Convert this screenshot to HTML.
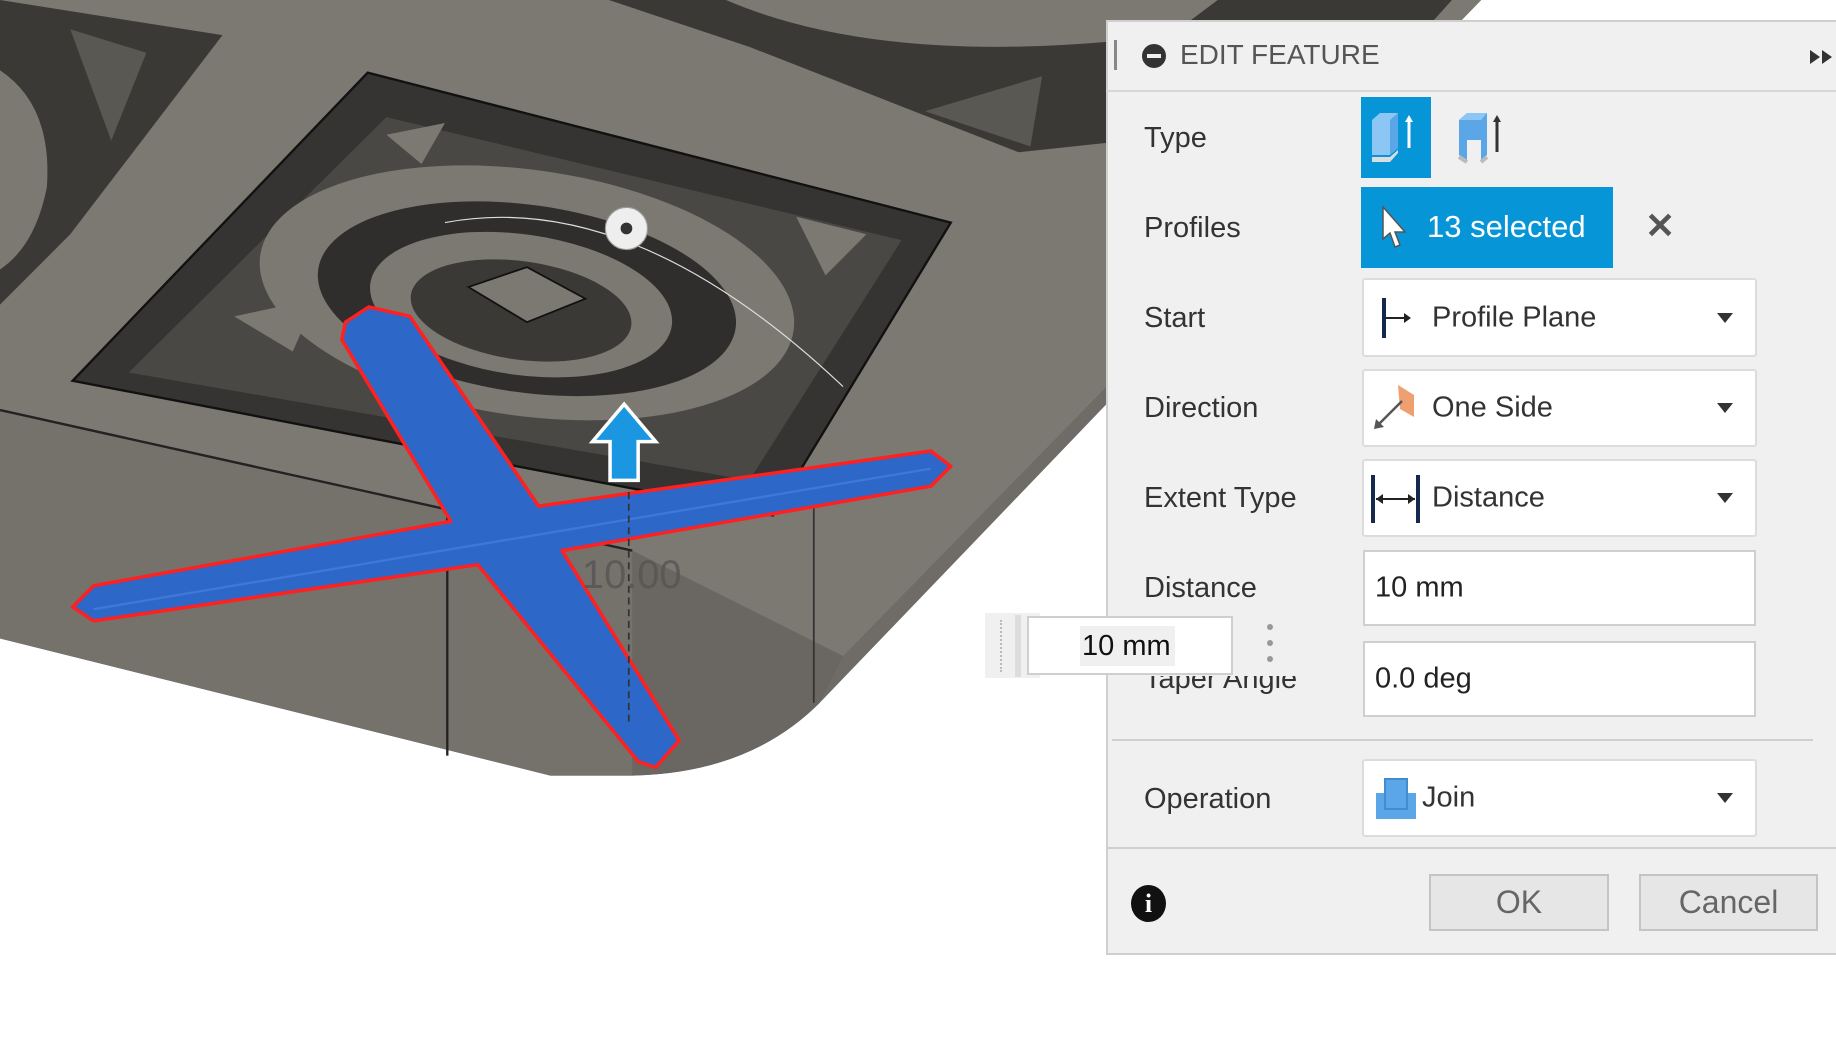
<!DOCTYPE html>
<html><head><meta charset="utf-8"><style>
*{margin:0;padding:0;box-sizing:border-box}
body{width:1836px;height:1038px;overflow:hidden;background:#fff;position:relative;font-family:"Liberation Sans",Arial,sans-serif}
.abs{position:absolute}
.lbl{position:absolute;left:1144px;font-size:29px;color:#333;line-height:34px}
.dd{position:absolute;left:1362px;width:395px;background:#fff;border:2px solid #dcdcdc;border-radius:3px}
.dd .t{position:absolute;left:68px;top:50%;transform:translateY(-50%);font-size:29px;color:#333}
.dd .ar{position:absolute;right:22px;top:50%;margin-top:-5px;width:0;height:0;border-left:8px solid transparent;border-right:8px solid transparent;border-top:10px solid #333}
.in{position:absolute;left:1363px;width:393px;background:#fff;border:2px solid #cfcfcf}
.in span{position:absolute;left:10px;top:50%;transform:translateY(-50%);font-size:29px;color:#222}
.btn{position:absolute;top:874px;height:57px;background:#e6e6e6;border:2px solid #c4c4c4;font-size:32px;color:#666;text-align:center;line-height:53px}
</style></head><body>
<svg class="abs" style="left:0;top:0" width="1836" height="1038" viewBox="0 0 1568 886" preserveAspectRatio="none">
<!-- body -->
<path d="M0,0 L1265,0 L945,330 L945,345 L700,600 Q640,660 540,662 L470,662 L0,545 Z" fill="#6f6c67"/>
<!-- top face -->
<path d="M0,0 L1265,0 L945,330 L720,560 L540,470 L0,350 Z" fill="#7c7972"/>
<!-- front left face -->
<path d="M0,350 L540,470 L540,662 L470,662 L0,545 Z" fill="#75726c"/>
<path d="M540,470 L720,560 L700,600 Q640,660 540,662 Z" fill="#6a6762"/>
<line x1="382" y1="440" x2="382" y2="645" stroke="#222" stroke-width="2"/>
<line x1="695" y1="420" x2="695" y2="600" stroke="#333" stroke-width="1.5"/>
<path d="M0,350 L540,470" stroke="#222" stroke-width="2" fill="none"/>
<!-- top-left pockets -->
<path d="M0,0 L190,30 L60,200 L0,260 Z" fill="#3a3936"/>
<path d="M0,60 Q45,90 40,160 Q30,210 0,230 Z" fill="#7c7972"/>
<path d="M60,25 L125,45 L95,120 Z" fill="#5a5853"/>
<!-- top-right pocket -->
<path d="M520,0 L1240,0 L1150,100 L870,130 L640,40 Z" fill="#3a3936"/>
<path d="M620,0 Q760,60 1000,30 L1040,0 Z" fill="#7c7972"/>
<path d="M790,95 L890,65 L880,125 Z" fill="#5a5853"/>
<!-- square recess -->
<path d="M314,62 L812,190 L660,440 L62,325 Z" fill="#353432" stroke="#111" stroke-width="2"/>
<path d="M330,100 L770,205 L640,410 L110,318 Z" fill="#4a4845"/>
<ellipse cx="450" cy="250" rx="230" ry="105" fill="#7c7972" transform="rotate(8 450 250)"/>
<ellipse cx="450" cy="255" rx="180" ry="80" fill="#2f2e2c" transform="rotate(8 450 255)"/>
<ellipse cx="445" cy="260" rx="130" ry="60" fill="#7c7972" transform="rotate(8 445 260)"/>
<ellipse cx="445" cy="265" rx="95" ry="42" fill="#3a3936" transform="rotate(8 445 265)"/>
<path d="M400,245 L450,228 L500,255 L450,275 Z" fill="#7c7972" stroke="#111" stroke-width="1.5"/>
<path d="M200,270 L270,255 L250,300 Z" fill="#7c7972"/>
<path d="M680,185 L740,200 L705,235 Z" fill="#7c7972"/>
<path d="M330,115 L380,105 L360,140 Z" fill="#7c7972"/>
<path d="M380,190 Q540,160 720,330" stroke="#ddd" stroke-width="1" fill="none"/>
<!-- X shape -->
<g fill="#2d68c9" stroke="#ff2020" stroke-width="3" stroke-linejoin="round">
<path d="M295,275 L315,262 L350,270 L460,432 L795,385 L812,398 L795,415 L480,470 L580,632 L560,655 L545,650 L408,482 L80,530 L62,518 L80,500 L385,445 L292,290 Z"/>
</g>
<path d="M80,520 L795,400" stroke="#4b84e0" stroke-width="2" opacity=".6"/>
<text x="497" y="502" font-family="Liberation Sans" font-size="34" fill="#555" opacity=".8">10.00</text>
<line x1="537" y1="420" x2="537" y2="620" stroke="#333" stroke-width="1.5" stroke-dasharray="6,4"/>
<!-- arrow -->
<path d="M533,345 L560,377 L545,377 L545,410 L521,410 L521,377 L506,377 Z" fill="#1a97e0" stroke="#fff" stroke-width="3"/>
<!-- marker -->
<circle cx="535" cy="195" r="18" fill="#eee" stroke="#999" stroke-width="1"/>
<circle cx="535" cy="195" r="5" fill="#333"/>
</svg>

<!-- panel -->
<div class="abs" style="left:1106px;top:20px;width:740px;height:935px;background:#f0f0f0;border:2px solid #cfcfcf"></div>
<div class="abs" style="left:1106px;top:90px;width:730px;height:2px;background:#d6d6d6"></div>
<div class="abs" style="left:1114px;top:40px;width:3px;height:30px;background:#888"></div>
<div class="abs" style="left:1142px;top:44px;width:24px;height:24px;border-radius:50%;background:#333"></div>
<div class="abs" style="left:1147px;top:54px;width:14px;height:4px;background:#f0f0f0"></div>
<div class="abs" style="left:1180px;top:38px;font-size:28px;color:#555;line-height:34px">EDIT FEATURE</div>
<svg class="abs" style="left:1808px;top:48px" width="28" height="18"><path d="M2,2 L12,9 L2,16Z M14,2 L24,9 L14,16Z" fill="#333"/></svg>

<div class="lbl" style="top:121px">Type</div>
<div class="lbl" style="top:211px">Profiles</div>
<div class="lbl" style="top:301px">Start</div>
<div class="lbl" style="top:391px">Direction</div>
<div class="lbl" style="top:481px">Extent Type</div>
<div class="lbl" style="top:571px">Distance</div>
<div class="lbl" style="top:662px;clip-path:inset(14px 0 0 0)">Taper Angle</div>
<div class="lbl" style="top:782px">Operation</div>

<!-- type buttons -->
<div class="abs" style="left:1361px;top:97px;width:70px;height:81px;background:#0696d7"></div>
<svg class="abs" style="left:1368px;top:110px" width="60" height="60"><path d="M4,10 L12,3 L30,3 L30,38 L22,45 L4,45Z" fill="#8cc6f5"/><path d="M22,10 L30,3 L30,38 L22,45Z" fill="#5aa6e6"/><path d="M4,47 L22,47 L30,40 L30,43 L22,52 L4,52Z" fill="#ddd"/><path d="M41,8 L41,38" stroke="#fff" stroke-width="3"/><path d="M37,12 L41,5 L45,12Z" fill="#fff"/></svg>
<svg class="abs" style="left:1455px;top:110px" width="60" height="60"><path d="M4,10 L12,3 L32,3 L32,45 L26,50 L26,30 L12,30 L12,50 L4,45Z" fill="#5aa6e6"/><path d="M12,3 L32,3 L26,10 L4,10Z" fill="#8cc6f5"/><path d="M4,47 L12,52 M26,52 L32,47" stroke="#bbb" stroke-width="4"/><path d="M42,8 L42,42" stroke="#333" stroke-width="3"/><path d="M38,12 L42,5 L46,12Z" fill="#333"/></svg>

<!-- profiles -->
<div class="abs" style="left:1361px;top:187px;width:252px;height:81px;background:#0696d7"></div>
<svg class="abs" style="left:1380px;top:205px" width="30" height="46"><path d="M3,2 L3,34 L10,28 L15,42 L20,40 L15,27 L25,27Z" fill="#fff" stroke="#555" stroke-width="1.5"/></svg>
<div class="abs" style="left:1427px;top:209px;font-size:31px;color:#fff;line-height:36px">13 selected</div>
<div class="abs" style="left:1645px;top:206px;font-size:36px;color:#555;font-weight:bold;line-height:40px">✕</div>

<div class="dd" style="top:278px;height:79px"><svg class="abs" style="left:16px;top:18px" width="36" height="40"><path d="M4,0 V40" stroke="#15284e" stroke-width="4"/><path d="M6,20 H28" stroke="#222" stroke-width="2"/><path d="M24,15 L31,20 L24,25Z" fill="#222"/></svg><div class="t">Profile Plane</div><div class="ar"></div></div>
<div class="dd" style="top:369px;height:78px"><svg class="abs" style="left:6px;top:12px" width="50" height="52"><path d="M28,2 L44,12 L44,34 L30,26Z" fill="#f0a070"/><path d="M32,18 L6,44" stroke="#555" stroke-width="2.5"/><path d="M4,46 L6,36 L14,44Z" fill="#555"/></svg><div class="t">One Side</div><div class="ar"></div></div>
<div class="dd" style="top:459px;height:78px"><svg class="abs" style="left:6px;top:14px" width="52" height="48"><path d="M3,0 V48 M48,0 V48" stroke="#15284e" stroke-width="4"/><path d="M6,24 H45" stroke="#222" stroke-width="2"/><path d="M6,24 L13,19 L13,29Z M45,24 L38,19 L38,29Z" fill="#222"/></svg><div class="t">Distance</div><div class="ar"></div></div>
<div class="in" style="top:550px;height:76px"><span>10 mm</span></div>
<div class="in" style="top:641px;height:76px"><span>0.0 deg</span></div>
<div class="abs" style="left:1112px;top:739px;width:701px;height:2px;background:#cfcfcf"></div>
<div class="dd" style="top:759px;height:78px"><svg class="abs" style="left:10px;top:16px" width="44" height="44"><rect x="2" y="16" width="40" height="26" fill="#5aa6e6"/><rect x="11" y="2" width="22" height="30" fill="#5aa6e6" stroke="#3f8ccf" stroke-width="2"/></svg><div class="t" style="left:58px">Join</div><div class="ar"></div></div>
<div class="abs" style="left:1106px;top:847px;width:730px;height:2px;background:#cfcfcf"></div>
<div class="abs" style="left:1131px;top:885px;width:35px;height:37px;border-radius:50%;background:#111;color:#fff;font-weight:bold;font-size:26px;text-align:center;line-height:37px;font-family:'Liberation Serif',serif">i</div>
<div class="btn" style="left:1429px;width:180px">OK</div>
<div class="btn" style="left:1639px;width:179px">Cancel</div>

<!-- floating input -->
<div class="abs" style="left:985px;top:613px;width:55px;height:65px;background:#f0f0f0"></div>
<div class="abs" style="left:1000px;top:620px;width:6px;height:52px;border-left:2px dotted #bbb"></div>
<div class="abs" style="left:1015px;top:615px;width:6px;height:62px;background:#ddd"></div>
<div class="abs" style="left:1027px;top:616px;width:206px;height:59px;background:#fff;border:2px solid #cfcfcf"></div>
<div class="abs" style="left:1080px;top:626px;width:95px;height:40px;background:#f0f0f0"></div>
<div class="abs" style="left:1082px;top:629px;font-size:29px;color:#111;line-height:34px">10 mm</div>
<div class="abs" style="left:1267px;top:624px;width:6px;height:6px;border-radius:50%;background:#999;box-shadow:0 16px 0 #999,0 32px 0 #999"></div>
</body></html>
